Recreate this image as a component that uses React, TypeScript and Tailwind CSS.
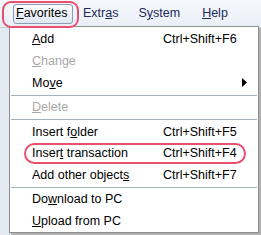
import React from "react";

type Item =
  | { kind: "item"; label: string; ul: number; shortcut?: string; disabled?: boolean; sub?: boolean }
  | { kind: "sep" };

const items: Item[] = [
  { kind: "item", label: "Add", ul: 0, shortcut: "Ctrl+Shift+F6" },
  { kind: "item", label: "Change", ul: 0, disabled: true },
  { kind: "item", label: "Move", ul: 2, sub: true },
  { kind: "sep" },
  { kind: "item", label: "Delete", ul: 0, disabled: true },
  { kind: "sep" },
  { kind: "item", label: "Insert folder", ul: 8, shortcut: "Ctrl+Shift+F5" },
  { kind: "item", label: "Insert transaction", ul: 5, shortcut: "Ctrl+Shift+F4" },
  { kind: "item", label: "Add other objects", ul: 16, shortcut: "Ctrl+Shift+F7" },
  { kind: "sep" },
  { kind: "item", label: "Download to PC", ul: 2 },
  { kind: "item", label: "Upload from PC", ul: 0 },
];

function Mnemonic({ text, ul }: { text: string; ul: number }) {
  return (
    <>
      {text.slice(0, ul)}
      <span className="underline underline-offset-1">{text[ul]}</span>
      {text.slice(ul + 1)}
    </>
  );
}

export default function App() {
  return (
    <div
      className="relative w-[261px] h-[235px] overflow-hidden bg-white text-[12.5px] text-black"
      style={{ fontFamily: "'Liberation Sans', Arial, sans-serif" }}
    >
      {/* menu bar */}
      <div className="h-[28px] flex items-center bg-gradient-to-b from-[#f7f9fd] to-[#e9eef6] border-b border-[#c6cfdc]">
        <div className="ml-[13px] h-[20px] w-[60px] flex items-center pl-[2px] rounded-[3px] border border-[#8a9bb3] bg-gradient-to-b from-[#fdfeff] to-[#dfe7f2]">
          <Mnemonic text="Favorites" ul={0} />
        </div>
        <div className="ml-[10px] text-[#1c2a5a]"><Mnemonic text="Extras" ul={4} /></div>
        <div className="ml-[20px] text-[#1c2a5a]"><Mnemonic text="System" ul={1} /></div>
        <div className="ml-[22px] text-[#1c2a5a]"><Mnemonic text="Help" ul={0} /></div>
      </div>

      {/* window behind the menu */}
      <div className="absolute left-0 top-[28px] w-[10px] bottom-0 bg-[#e4eaf2] border-r border-[#b8c2cf]" />

      {/* dropdown */}
      <div className="absolute left-[9px] top-[26px] w-[250px] h-[207px] bg-white border border-[#8e8f8f] shadow-[2px_2px_0_#b0b0b0] flex flex-col pt-[2px]">
        {items.map((it, i) =>
          it.kind === "sep" ? (
            <div key={i} className="h-px bg-[#a7b0bd] my-[1px] mx-[1px]" />
          ) : (
            <div
              key={i}
              className={`h-[22px] flex items-center pl-[22px] pr-[10px] ${it.disabled ? "text-[#a8a8a8]" : "text-black"}`}
            >
              <span className="w-[131px] whitespace-nowrap">
                <Mnemonic text={it.label} ul={it.ul} />
              </span>
              {it.shortcut && <span className="whitespace-nowrap">{it.shortcut}</span>}
              {it.sub && (
                <svg className="ml-auto" width="6" height="9" viewBox="0 0 6 9">
                  <path d="M0 0 L5 4.5 L0 9 Z" fill="#000" />
                </svg>
              )}
            </div>
          )
        )}
      </div>

      {/* red highlight rings */}
      <div className="absolute left-[2px] top-[1px] w-[77px] h-[27px] rounded-[9px] border-2 border-[#e8506e]" />
      <div className="absolute left-[24px] top-[143px] w-[222px] h-[21px] rounded-[11px] border-2 border-[#e8506e]" />
    </div>
  );
}
